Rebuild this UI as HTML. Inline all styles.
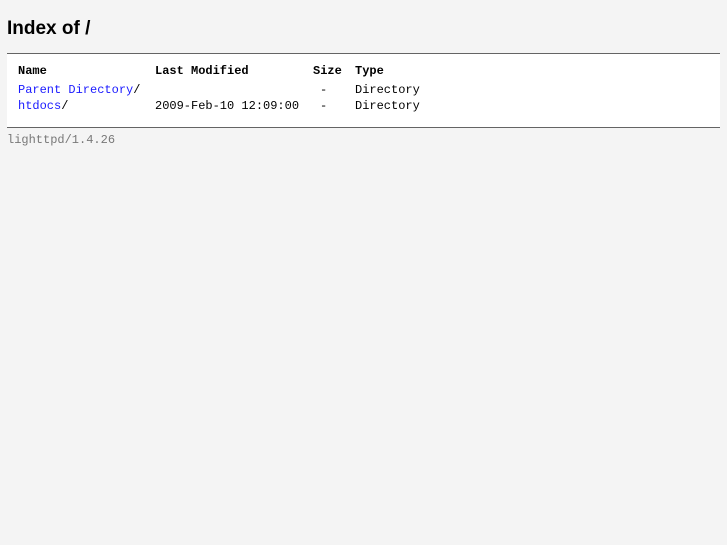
<!DOCTYPE html>
<html><head><meta charset="utf-8"><style>
html,body{margin:0;padding:0;background:#f4f4f4;width:727px;height:545px;overflow:hidden}
h2{position:absolute;left:7px;top:17px;margin:0;font:bold 19px "Liberation Sans",sans-serif;color:#000;line-height:24px}
.list{position:absolute;left:7px;top:53px;width:713px;height:73px;background:#fff;border-top:1px solid #646464;border-bottom:1px solid #646464}
.t{position:absolute;font:12px "Liberation Mono",monospace;line-height:14px;white-space:pre;color:#000}
.b{font-weight:bold}
a{color:#1a1aff;text-decoration:none}
.foot{color:#787878}
</style></head><body>
<h2>Index of /</h2>
<div class="list"></div>
<div class="t b" style="left:18px;top:64px">Name</div>
<div class="t b" style="left:155px;top:64px">Last Modified</div>
<div class="t b" style="left:313px;top:64px">Size</div>
<div class="t b" style="left:355px;top:64px">Type</div>
<div class="t" style="left:18px;top:83px"><a>Parent Directory</a>/</div>
<div class="t" style="left:320px;top:83px">-</div>
<div class="t" style="left:355px;top:83px">Directory</div>
<div class="t" style="left:18px;top:99px"><a>htdocs</a>/</div>
<div class="t" style="left:155px;top:99px">2009-Feb-10 12:09:00</div>
<div class="t" style="left:320px;top:99px">-</div>
<div class="t" style="left:355px;top:99px">Directory</div>
<div class="t foot" style="left:7px;top:133px">lighttpd/1.4.26</div>
</body></html>
